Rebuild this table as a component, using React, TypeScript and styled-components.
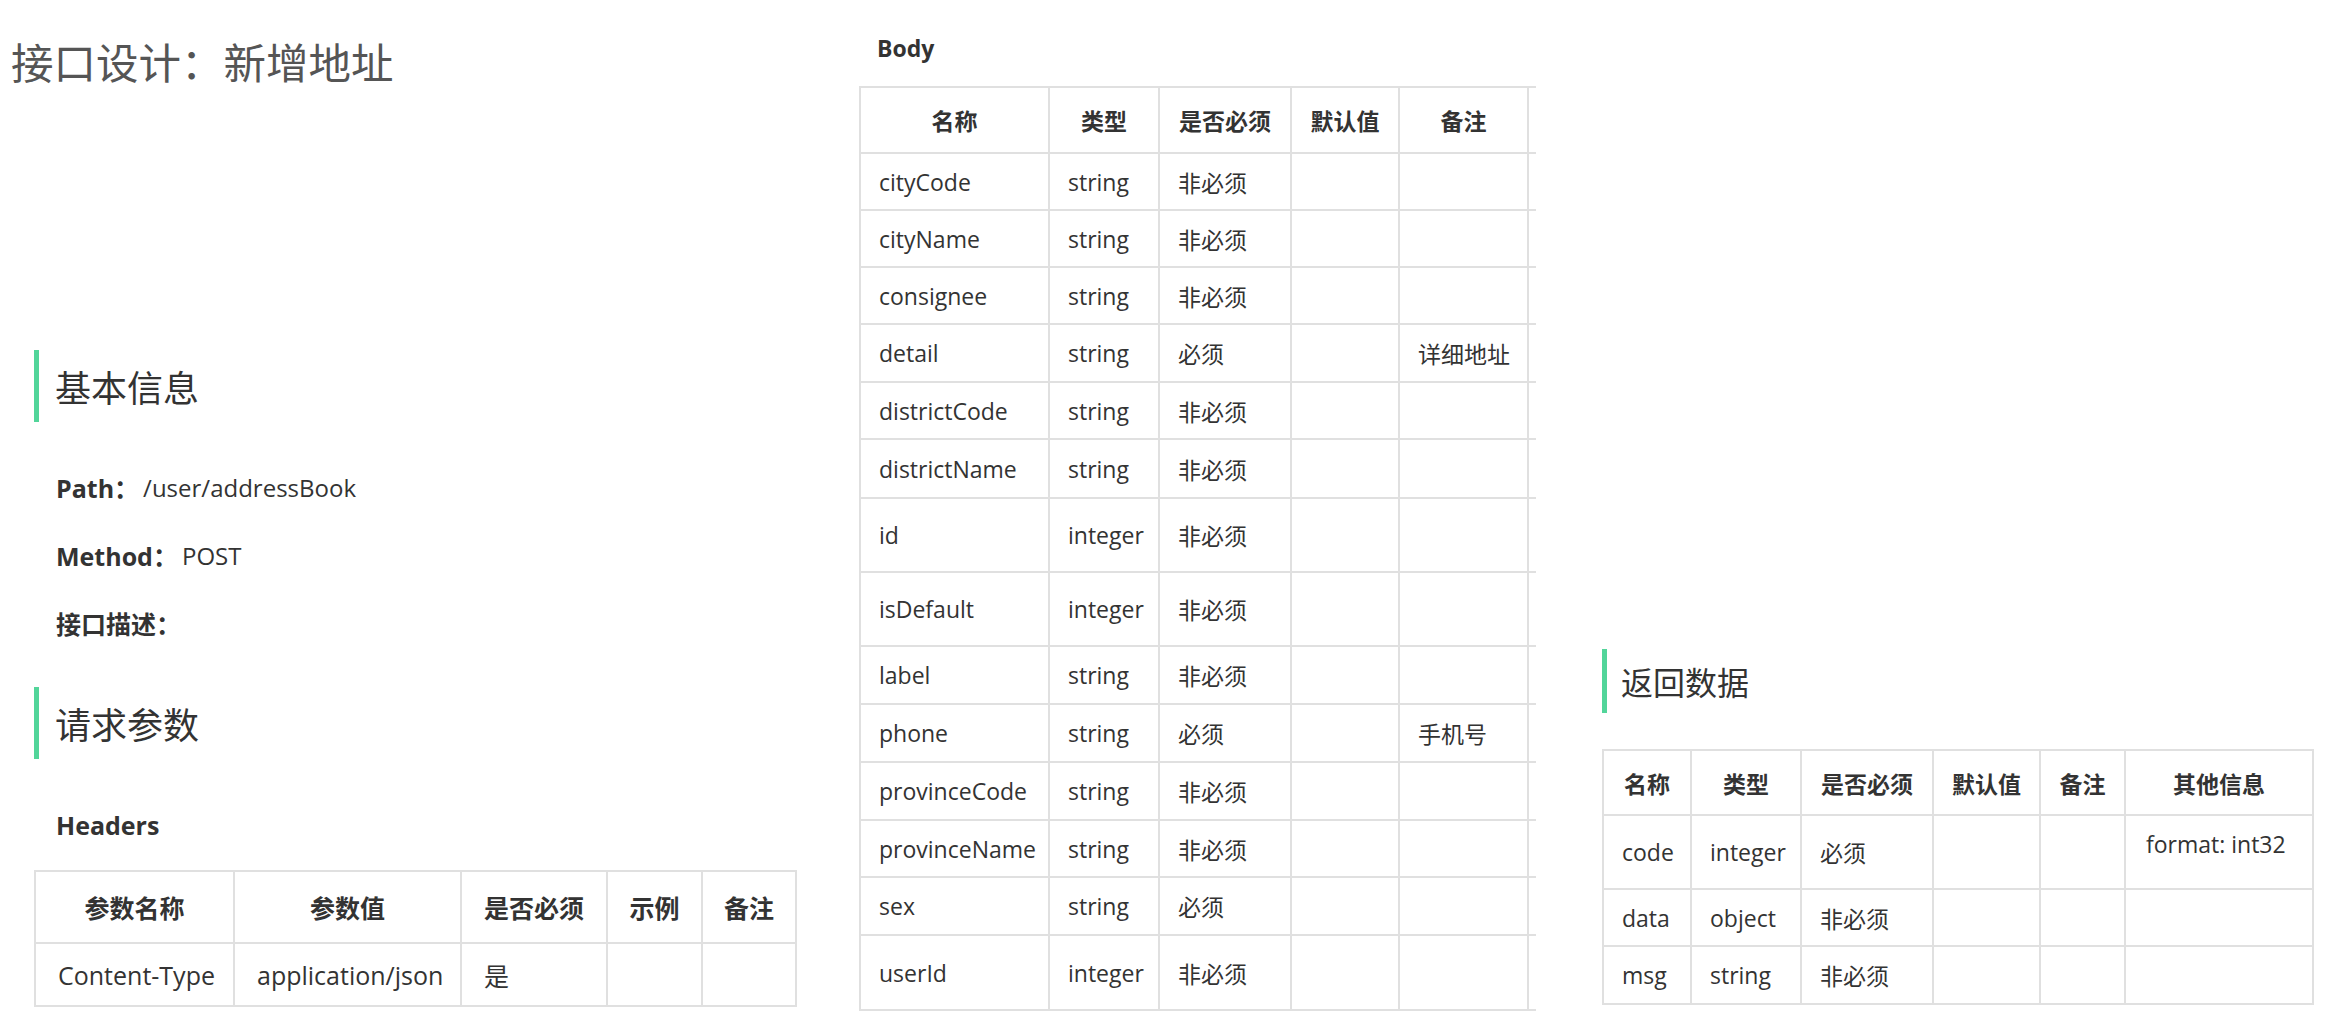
import React from "react";
import styled, { createGlobalStyle } from "styled-components";

const GlobalStyle = createGlobalStyle`
  html, body {
    margin: 0;
    padding: 0;
    background: #ffffff;
  }
  body {
    font-family: "Open Sans", "Noto Sans CJK SC", sans-serif;
    color: #333333;
  }
  #root {
    width: 2351px;
    height: 1032px;
    overflow: hidden;
  }
`;

const BORDER = "#e0e0e0";
const ACCENT = "#52d59a";

const Page = styled.div`
  display: flex;
  align-items: flex-start;
  width: 2351px;
  height: 1032px;
`;

const LeftColumn = styled.section`
  flex: none;
  width: 859px;
`;

const MiddleColumn = styled.section`
  flex: none;
  width: 677px;
  overflow: hidden;
  padding-top: 28px;
`;

const RightColumn = styled.section`
  flex: none;
  margin-left: 66px;
  padding-top: 649px;
`;

const DocTitle = styled.h1`
  margin: 38px 0 0 11px;
  font-size: 42.5px;
  line-height: 50px;
  font-weight: 400;
  color: #555555;
  white-space: nowrap;
`;

const SectionBody = styled.div`
  padding-left: 34px;
`;

const SectionHeading = styled.h2<{ $size: number; $height: number; $gap: number; $top: number }>`
  margin: ${(p) => p.$top}px 0 0 0;
  height: ${(p) => p.$height}px;
  display: flex;
  align-items: center;
  border-left: 5px solid ${ACCENT};
  padding-left: ${(p) => p.$gap}px;
  font-size: ${(p) => p.$size}px;
  font-weight: 400;
  color: #333333;
  white-space: nowrap;
`;

const InfoList = styled.div`
  margin-top: 31px;
  padding-left: 22px;
  display: flex;
  flex-direction: column;
`;

const InfoLine = styled.p`
  margin: 0;
  height: 68px;
  display: flex;
  align-items: center;
  font-size: 24px;
  color: #333333;
`;

const InfoLabel = styled.strong`
  font-weight: 700;
  font-size: 25px;
`;

const InfoValue = styled.span`
  margin-left: 4px;
`;

const SubTitle = styled.h4<{ $size: number; $top: number; $indent: number }>`
  margin: ${(p) => p.$top}px 0 0 ${(p) => p.$indent}px;
  height: 40px;
  display: flex;
  align-items: center;
  font-size: ${(p) => p.$size}px;
  font-weight: 700;
  color: #333333;
`;

const DocTable = styled.table<{ $fontSize: number; $width: number; $top: number }>`
  margin-top: ${(p) => p.$top}px;
  width: ${(p) => p.$width}px;
  border-collapse: separate;
  border-spacing: 0;
  table-layout: fixed;
  border-top: 2px solid ${BORDER};
  border-left: 2px solid ${BORDER};
  font-size: ${(p) => p.$fontSize}px;
  color: #333333;
`;

const Row = styled.tr<{ $height: number }>`
  height: ${(p) => p.$height}px;
`;

const HeadCell = styled.th`
  border-right: 2px solid ${BORDER};
  border-bottom: 2px solid ${BORDER};
  padding: 0 4px;
  text-align: center;
  font-weight: 700;
  white-space: nowrap;
  overflow: hidden;
`;

const BodyCell = styled.td<{ $padX: number; $variant?: "note" }>`
  border-right: 2px solid ${BORDER};
  border-bottom: 2px solid ${BORDER};
  padding: ${(p) => (p.$variant === "note" ? "12px 4px 0 20px" : `0 ${p.$padX}px`)};
  text-align: left;
  vertical-align: ${(p) => (p.$variant === "note" ? "top" : "middle")};
  white-space: nowrap;
  overflow: hidden;
`;

type TableRow = { cells: string[]; height: number };

type TableSpec = {
  columns: number[];
  headers: string[];
  headerHeight: number;
  rows: TableRow[];
  fontSize: number;
  padX: number;
  top: number;
  noteColumn?: number;
};

const DataTable: React.FC<TableSpec> = ({
  columns,
  headers,
  headerHeight,
  rows,
  fontSize,
  padX,
  top,
  noteColumn,
}) => {
  const width = columns.reduce((a, b) => a + b, 0) + 2;
  return (
    <DocTable $fontSize={fontSize} $width={width} $top={top}>
      <colgroup>
        {columns.map((w, i) => (
          <col key={i} style={{ width: w }} />
        ))}
      </colgroup>
      <thead>
        <Row $height={headerHeight}>
          {headers.map((h, i) => (
            <HeadCell key={i}>{h}</HeadCell>
          ))}
        </Row>
      </thead>
      <tbody>
        {rows.map((r, ri) => (
          <Row key={ri} $height={r.height}>
            {r.cells.map((c, ci) => (
              <BodyCell
                key={ci}
                $padX={padX}
                $variant={noteColumn === ci && c ? "note" : undefined}
              >
                {c}
              </BodyCell>
            ))}
          </Row>
        ))}
      </tbody>
    </DocTable>
  );
};

const bodyRows: TableRow[] = [
  { cells: ["cityCode", "string", "非必须", "", "", ""], height: 57 },
  { cells: ["cityName", "string", "非必须", "", "", ""], height: 57 },
  { cells: ["consignee", "string", "非必须", "", "", ""], height: 57 },
  { cells: ["detail", "string", "必须", "", "详细地址", ""], height: 58 },
  { cells: ["districtCode", "string", "非必须", "", "", ""], height: 57 },
  { cells: ["districtName", "string", "非必须", "", "", ""], height: 59 },
  { cells: ["id", "integer", "非必须", "", "", ""], height: 74 },
  { cells: ["isDefault", "integer", "非必须", "", "", ""], height: 74 },
  { cells: ["label", "string", "非必须", "", "", ""], height: 58 },
  { cells: ["phone", "string", "必须", "", "手机号", ""], height: 58 },
  { cells: ["provinceCode", "string", "非必须", "", "", ""], height: 58 },
  { cells: ["provinceName", "string", "非必须", "", "", ""], height: 57 },
  { cells: ["sex", "string", "必须", "", "", ""], height: 58 },
  { cells: ["userId", "integer", "非必须", "", "", ""], height: 75 },
];

const returnRows: TableRow[] = [
  { cells: ["code", "integer", "必须", "", "", "format: int32"], height: 74 },
  { cells: ["data", "object", "非必须", "", "", ""], height: 57 },
  { cells: ["msg", "string", "非必须", "", "", ""], height: 58 },
];

export default function App() {
  return (
    <>
      <GlobalStyle />
      <Page>
        <LeftColumn>
          <DocTitle>接口设计：新增地址</DocTitle>
          <SectionBody>
            <SectionHeading $size={36} $height={72} $gap={16} $top={262}>
              基本信息
            </SectionHeading>
            <InfoList>
              <InfoLine>
                <InfoLabel>Path：</InfoLabel>
                <InfoValue>/user/addressBook</InfoValue>
              </InfoLine>
              <InfoLine>
                <InfoLabel>Method：</InfoLabel>
                <InfoValue>POST</InfoValue>
              </InfoLine>
              <InfoLine>
                <InfoLabel>接口描述：</InfoLabel>
              </InfoLine>
            </InfoList>
            <SectionHeading $size={36} $height={72} $gap={16} $top={30}>
              请求参数
            </SectionHeading>
            <SubTitle $size={25} $top={46} $indent={22}>
              Headers
            </SubTitle>
            <DataTable
              columns={[199, 227, 146, 95, 94]}
              headers={["参数名称", "参数值", "是否必须", "示例", "备注"]}
              headerHeight={72}
              rows={[
                {
                  cells: ["Content-Type", "application/json", "是", "", ""],
                  height: 63,
                },
              ]}
              fontSize={25}
              padX={22}
              top={25}
            />
          </SectionBody>
        </LeftColumn>

        <MiddleColumn>
          <SubTitle $size={23} $top={0} $indent={18}>
            Body
          </SubTitle>
          <DataTable
            columns={[189, 110, 132, 108, 129, 150]}
            headers={["名称", "类型", "是否必须", "默认值", "备注", ""]}
            headerHeight={66}
            rows={bodyRows}
            fontSize={23}
            padX={18}
            top={18}
          />
        </MiddleColumn>

        <RightColumn>
          <SectionHeading $size={32} $height={64} $gap={14} $top={0}>
            返回数据
          </SectionHeading>
          <DataTable
            columns={[88, 110, 132, 107, 85, 188]}
            headers={["名称", "类型", "是否必须", "默认值", "备注", "其他信息"]}
            headerHeight={65}
            rows={returnRows}
            fontSize={23}
            padX={18}
            top={36}
            noteColumn={5}
          />
        </RightColumn>
      </Page>
    </>
  );
}
